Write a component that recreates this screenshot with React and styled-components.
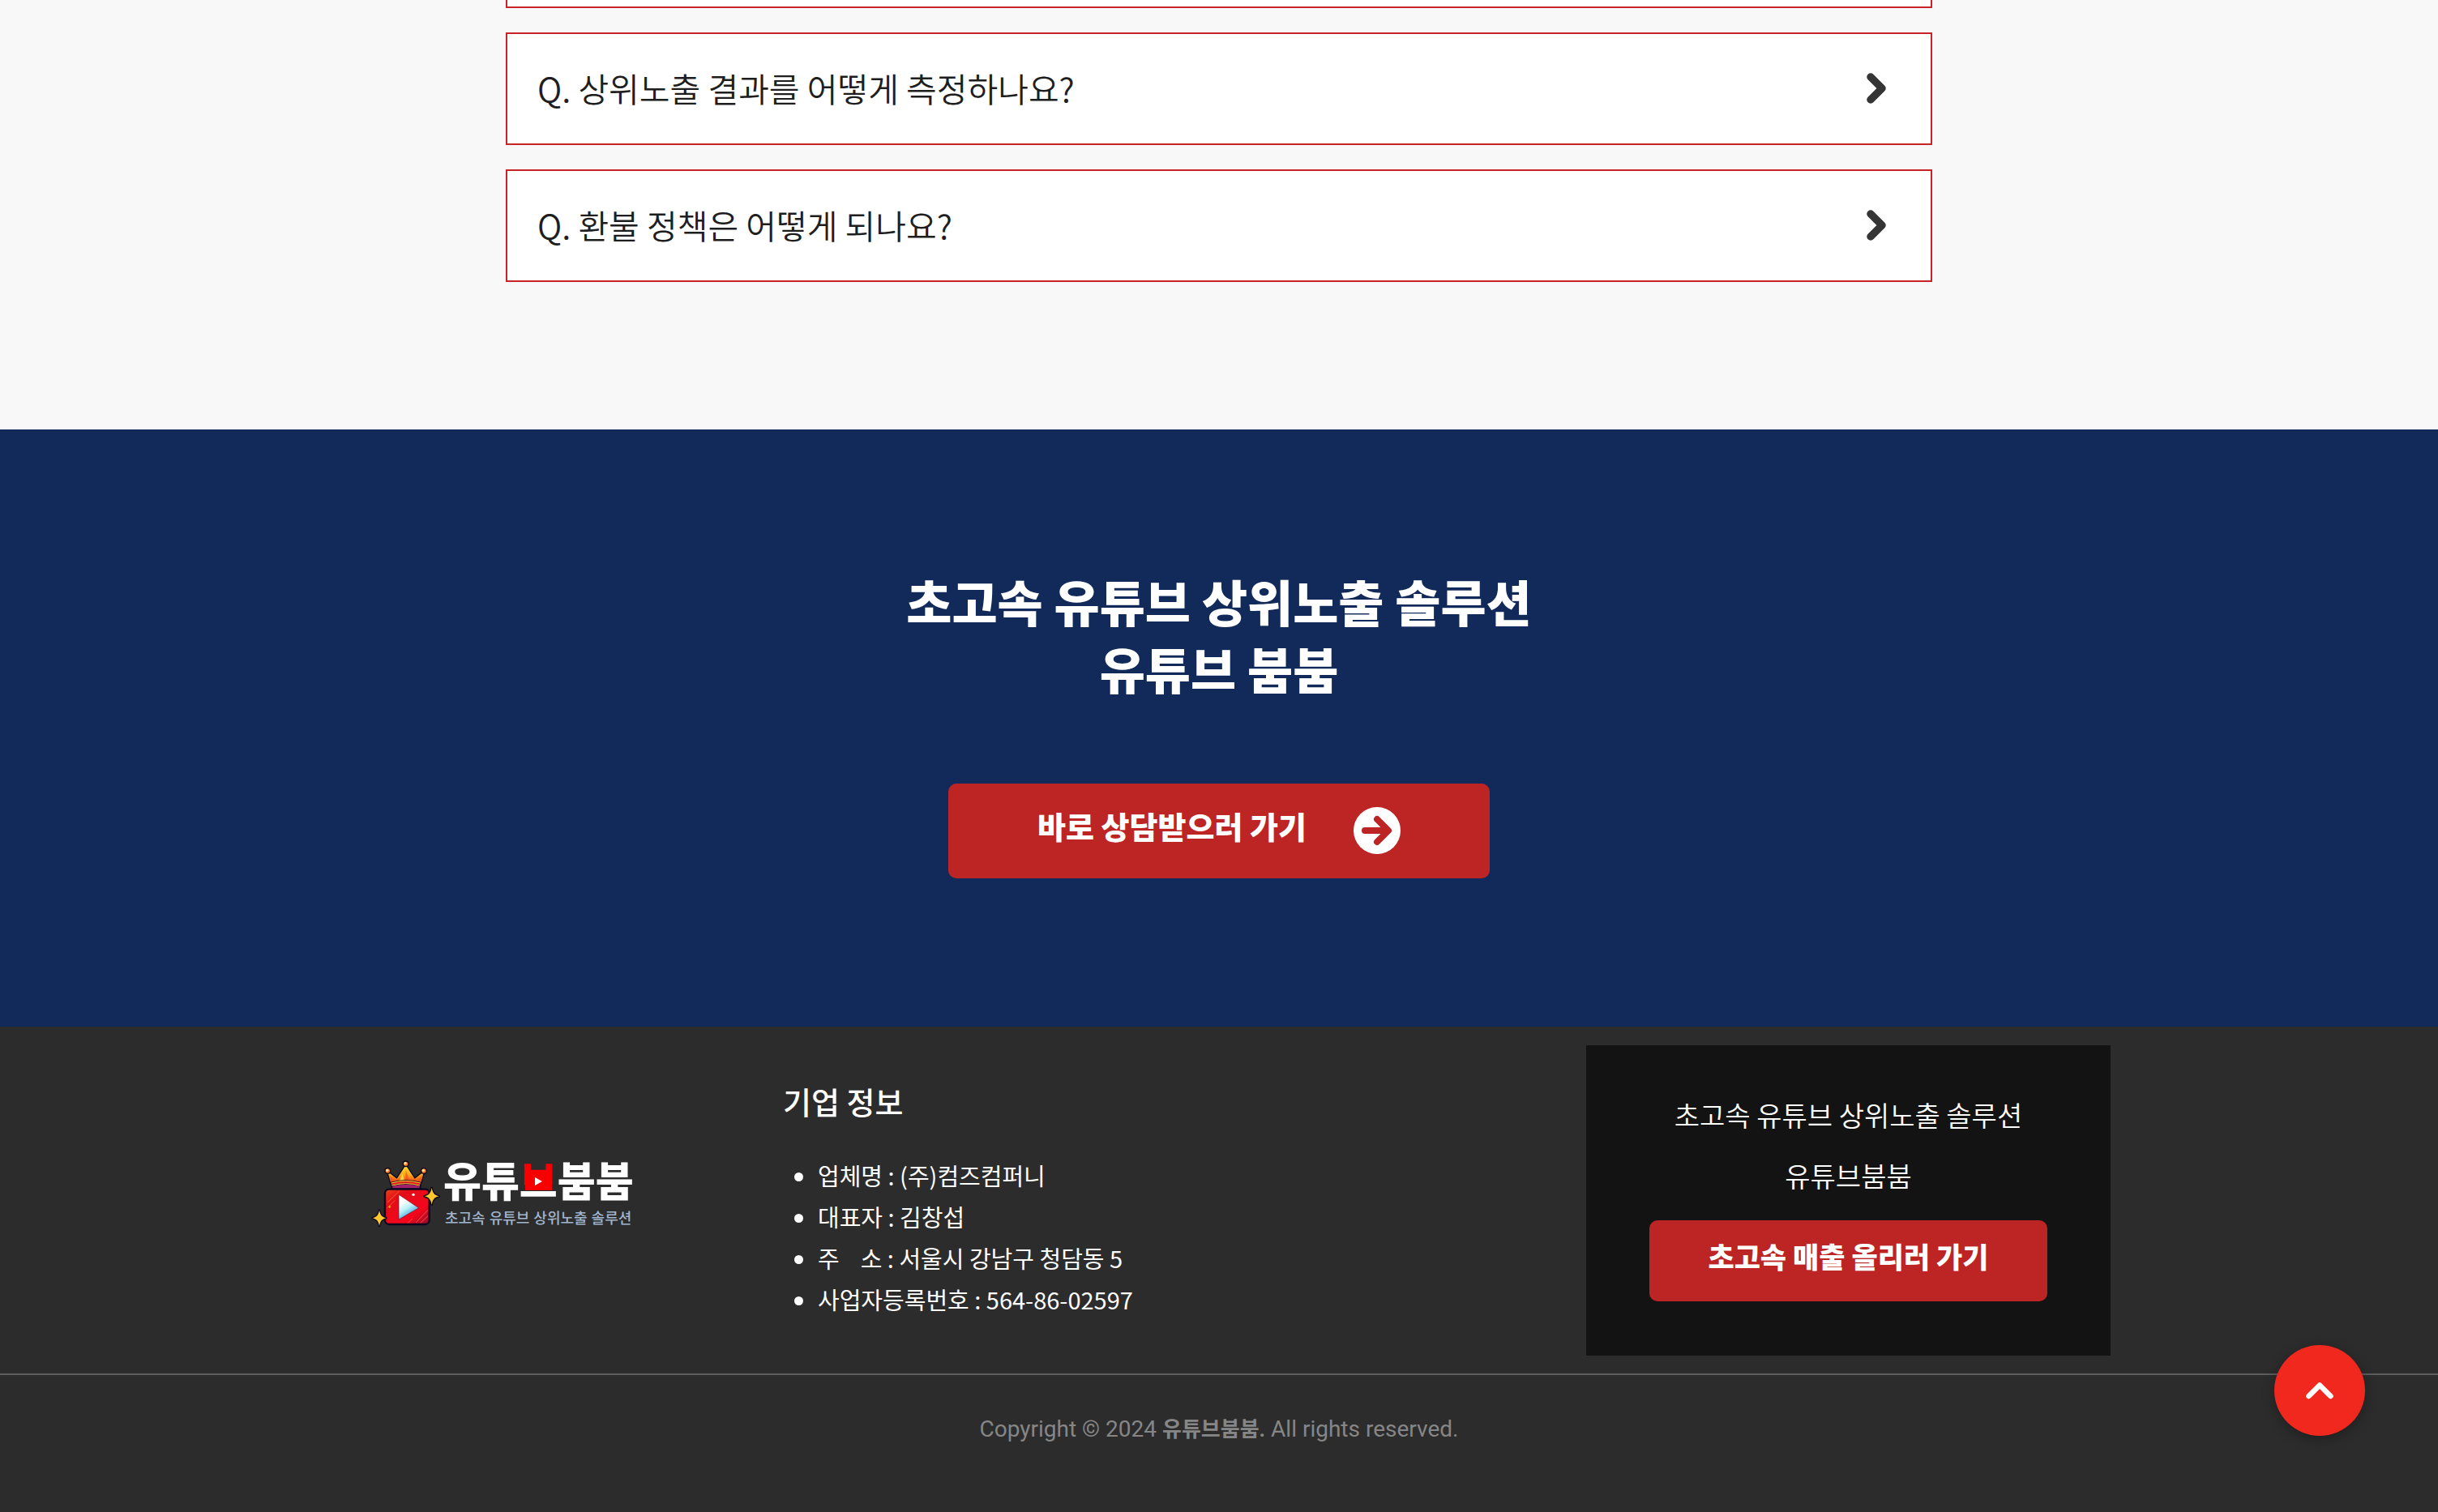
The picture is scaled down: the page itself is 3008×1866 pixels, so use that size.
import React from "react";
import styled, { createGlobalStyle, css } from "styled-components";

const GlobalStyle = createGlobalStyle`
  *, *::before, *::after { box-sizing: border-box; }
  body {
    margin: 0;
    background: #2c2c2c;
    font-family: "Noto Sans CJK KR", "Noto Sans", sans-serif;
  }
  h2, h3, p, ul { margin: 0; padding: 0; font-weight: inherit; }
`;

const Page = styled.div`
  display: flex;
  flex-direction: column;
  min-height: 100vh;
`;

const Faq = styled.section`
  display: flex;
  flex-direction: column;
  align-items: center;
  gap: 30px;
  padding: 0 40px 182px;
  background: #f8f8f8;
`;

const FaqCardTail = styled.div`
  width: 100%;
  max-width: 1760px;
  height: 10px;
  border: solid #c82427;
  border-width: 0 2px 2px;
  background: #fff;
`;

const FaqCard = styled.button`
  display: flex;
  align-items: center;
  justify-content: space-between;
  width: 100%;
  max-width: 1760px;
  padding: 38px 55px 40px 37px;
  border: 2px solid #c82427;
  background: #fff;
  color: #1e1e1e;
  font: 350 41px/57px "Noto Sans CJK KR", sans-serif;
  text-align: left;
  cursor: pointer;
`;

const Cta = styled.section`
  display: flex;
  flex-direction: column;
  align-items: center;
  gap: 101px;
  padding: 170px 40px 183px;
  background: #122a5a;
`;

const CtaTitle = styled.h2`
  color: #fff;
  font-size: 61px;
  font-weight: 900;
  line-height: 83px;
  text-align: center;
`;

const redButton = css`
  display: flex;
  align-items: center;
  justify-content: center;
  border-radius: 10px;
  background: #bd2424;
  color: #fff;
  font-weight: 900;
  text-decoration: none;
`;

const CtaLink = styled.a`
  ${redButton}
  gap: 58px;
  padding: 28px 110px 30px;
  font-size: 38px;
  line-height: 47px;
`;

const CtaLabel = styled.span`
  padding-bottom: 12px;
`;

const Footer = styled.footer`
  flex: 1;
  background: #2c2c2c;
  color: #fff;
`;

const FooterColumns = styled.div`
  display: grid;
  grid-template-columns: 508px 991px 647px;
  justify-content: center;
  align-items: center;
  padding: 23px 0 22px 54px;
  border-bottom: 2px solid #5c5c5c;
`;

const Logo = styled.a`
  display: flex;
  align-items: center;
  gap: 3px;
  padding-bottom: 16px;
  color: #fff;
  text-decoration: none;
`;

const LogoWords = styled.span`
  display: flex;
  flex-direction: column;
  gap: 3px;
  font-family: "Liberation Sans", "Noto Sans CJK KR", sans-serif;
`;

const LogoName = styled.span`
  display: flex;
  font-size: 51px;
  font-weight: 900;
  line-height: 58px;
`;

const LogoTile = styled.span`
  position: relative;
  background: linear-gradient(#f60000 66%, #fff 66%);
  background-clip: text;
  color: transparent;
`;

const LogoPlay = styled.svg`
  position: absolute;
  left: 7px;
  top: 16px;
  width: 33px;
  height: 22px;
`;

const LogoTagline = styled.span`
  padding-left: 2px;
  color: #a1b5cd;
  font-size: 18px;
  font-weight: 500;
  line-height: 24px;
`;

const Company = styled.div`
  display: flex;
  flex-direction: column;
  gap: 36px;
  padding-bottom: 6px;
`;

const CompanyTitle = styled.h3`
  font-size: 38px;
  font-weight: 500;
  line-height: 60px;
`;

const CompanyList = styled.ul`
  padding-left: 43px;
  font-size: 29px;
  line-height: 51px;
  white-space: pre;
`;

const Promo = styled.div`
  display: flex;
  flex-direction: column;
  align-items: center;
  padding: 48px 78px 67px;
  background: #131313;
  font-size: 34px;
  font-weight: 350;
  line-height: 75px;
`;

const PromoText = styled.p`
  text-align: center;
`;

const PromoLink = styled.a`
  ${redButton}
  align-self: stretch;
  margin-top: 18px;
  padding: 19px 0 31px;
  font-size: 35px;
  line-height: 50px;
`;

const Copyright = styled.p`
  padding: 46px 0;
  color: #868686;
  font-family: Roboto, "Noto Sans CJK KR", sans-serif;
  font-size: 28px;
  line-height: 42px;
  text-align: center;
`;

const Brand = styled.b`
  font-size: 26px;
`;

const TopButton = styled.button`
  position: fixed;
  right: 90px;
  bottom: 94px;
  display: flex;
  align-items: center;
  justify-content: center;
  width: 112px;
  height: 112px;
  padding: 0;
  border: 0;
  border-radius: 50%;
  background: #f1281e;
  box-shadow: 0 4px 16px rgba(0, 0, 0, 0.3);
  cursor: pointer;
`;

function ChevronRight() {
  return (
    <svg width="24" height="38" viewBox="0 0 24 38" fill="none" aria-hidden="true">
      <path d="M5 5 19 19 5 33" stroke="#353535" strokeWidth="9.5" strokeLinecap="round" strokeLinejoin="round" />
    </svg>
  );
}

function ChevronUp() {
  return (
    <svg width="34" height="22" viewBox="0 0 34 22" fill="none" aria-hidden="true">
      <path d="M3.500 18 17 4.500 30.500 18" stroke="#fff" strokeWidth="6.500" strokeLinecap="round" strokeLinejoin="round" />
    </svg>
  );
}

function ArrowCircle() {
  return (
    <svg width="58" height="58" viewBox="0 0 58 58" fill="none" aria-hidden="true">
      <circle cx="29" cy="29" r="29" fill="#fff" />
      <path d="M14 29H42M29 15 43 29 29 43" stroke="#bd2424" strokeWidth="8" strokeLinecap="round" strokeLinejoin="round" />
    </svg>
  );
}

const sparkle = "M0-31C4-11 10-4 27 0 10 4 4 11 0 31-4 11-10 4-27 0-10-4-4-11 0-31Z";

function CrownMark() {
  return (
    <svg width="86" height="88" viewBox="24 18 258 264" aria-hidden="true">
      <defs>
        <linearGradient id="tile" x1="0" y1="0" x2="1" y2="1">
          <stop offset="0" stopColor="#e8451c" />
          <stop offset="0.25" stopColor="#e30d18" />
          <stop offset="0.7" stopColor="#f5061c" />
          <stop offset="1" stopColor="#8e0a2c" />
        </linearGradient>
        <linearGradient id="gold" x1="0" y1="0" x2="0" y2="1">
          <stop offset="0" stopColor="#ffe326" />
          <stop offset="0.55" stopColor="#fba51c" />
          <stop offset="1" stopColor="#e8301a" />
        </linearGradient>
        <linearGradient id="play" x1="0" y1="0" x2="0.5" y2="1">
          <stop offset="0.3" stopColor="#fff" />
          <stop offset="0.6" stopColor="#b9f0f6" />
          <stop offset="1" stopColor="#1f8fe0" />
        </linearGradient>
      </defs>
      <path d="M100 116Q152 104 206 116L206 130H100Z" fill="#a3206c" stroke="#0b0920" strokeWidth="6" />
      <rect x="75" y="131" width="164" height="130" rx="15" fill="url(#tile)" stroke="#0b0920" strokeWidth="7" />
      <path d="M84 180 128 138M84 200 112 172M190 254 234 208M160 256 176 240M206 256 234 230" stroke="#ff7a3a" strokeWidth="3" opacity="0.7" />
      <path d="M88 196h9M92 191v10" stroke="#ffb020" strokeWidth="3" />
      <path d="M126 151 200 200 126 243Z" fill="url(#play)" stroke="#8d0b25" strokeWidth="2" />
      <circle cx="180" cy="151" r="5" fill="#fff" />
      <path
        d="M85 66 119 92 152 42 185 92 219 66 207 110Q152 94 97 110Z"
        fill="url(#gold)"
        stroke="#0b0920"
        strokeWidth="8"
        strokeLinejoin="round"
        paintOrder="stroke"
      />
      <path d="M152 60 166 100H150ZM92 78 112 104H99ZM213 78 190 104H205Z" fill="#f0521a" opacity="0.75" />
      <path d="M140 74 146 98H130Z" fill="#fff04a" opacity="0.8" />
      <path d="M96 106Q152 90 208 106L206 118Q152 104 98 118Z" fill="#d81a24" stroke="#0b0920" strokeWidth="3" />
      <path d="M98 108Q152 93 206 108M100 117Q152 103 204 117" stroke="#ffd22a" strokeWidth="3" fill="none" />
      {[[85, 63], [152, 37], [219, 63]].map(([x, y]) => (
        <g key={x}>
          <circle cx={x} cy={y} r="10" fill="#f7781f" stroke="#0b0920" strokeWidth="4" />
          <circle cx={x - 2} cy={y - 2} r="5" fill="#ffe2a0" />
        </g>
      ))}
      <g fill="#ffc72e" stroke="#0b0920" strokeWidth="8" strokeLinejoin="round" paintOrder="stroke">
        <path d={sparkle} transform="translate(248 157)" />
        <path d={sparkle} transform="translate(54 238) scale(.94)" />
      </g>
    </svg>
  );
}

const questions = ["Q. 상위노출 결과를 어떻게 측정하나요?", "Q. 환불 정책은 어떻게 되나요?"];

const company = [
  "업체명 : (주)컴즈컴퍼니",
  "대표자 : 김창섭",
  "주    소 : 서울시 강남구 청담동 5",
  "사업자등록번호 : 564-86-02597",
];

export default function App() {
  return (
    <Page>
      <GlobalStyle />
      <Faq>
        <FaqCardTail />
        {questions.map((q) => (
          <FaqCard key={q} type="button">
            {q}
            <ChevronRight />
          </FaqCard>
        ))}
      </Faq>
      <Cta>
        <CtaTitle>
          초고속 유튜브 상위노출 솔루션
          <br />
          유튜브 붐붐
        </CtaTitle>
        <CtaLink href="#contact">
          <CtaLabel>바로 상담받으러 가기</CtaLabel>
          <ArrowCircle />
        </CtaLink>
      </Cta>
      <Footer>
        <FooterColumns>
          <Logo href="#top">
            <CrownMark />
            <LogoWords>
              <LogoName>
                유튜
                <LogoTile>
                  브
                  <LogoPlay viewBox="0 0 33 22" aria-hidden="true">
                    <path d="M0 0h33v22H0z" fill="#f60000" />
                    <path d="M12 6v10l9-5z" fill="#fff" />
                  </LogoPlay>
                </LogoTile>
                붐붐
              </LogoName>
              <LogoTagline>초고속 유튜브 상위노출 솔루션</LogoTagline>
            </LogoWords>
          </Logo>
          <Company>
            <CompanyTitle>기업 정보</CompanyTitle>
            <CompanyList>
              {company.map((line) => (
                <li key={line}>{line}</li>
              ))}
            </CompanyList>
          </Company>
          <Promo>
            <PromoText>초고속 유튜브 상위노출 솔루션</PromoText>
            <PromoText>유튜브붐붐</PromoText>
            <PromoLink href="#contact">초고속 매출 올리러 가기</PromoLink>
          </Promo>
        </FooterColumns>
        <Copyright>
          Copyright © 2024 <Brand>유튜브붐붐.</Brand> All rights reserved.
        </Copyright>
      </Footer>
      <TopButton type="button" aria-label="맨 위로">
        <ChevronUp />
      </TopButton>
    </Page>
  );
}
